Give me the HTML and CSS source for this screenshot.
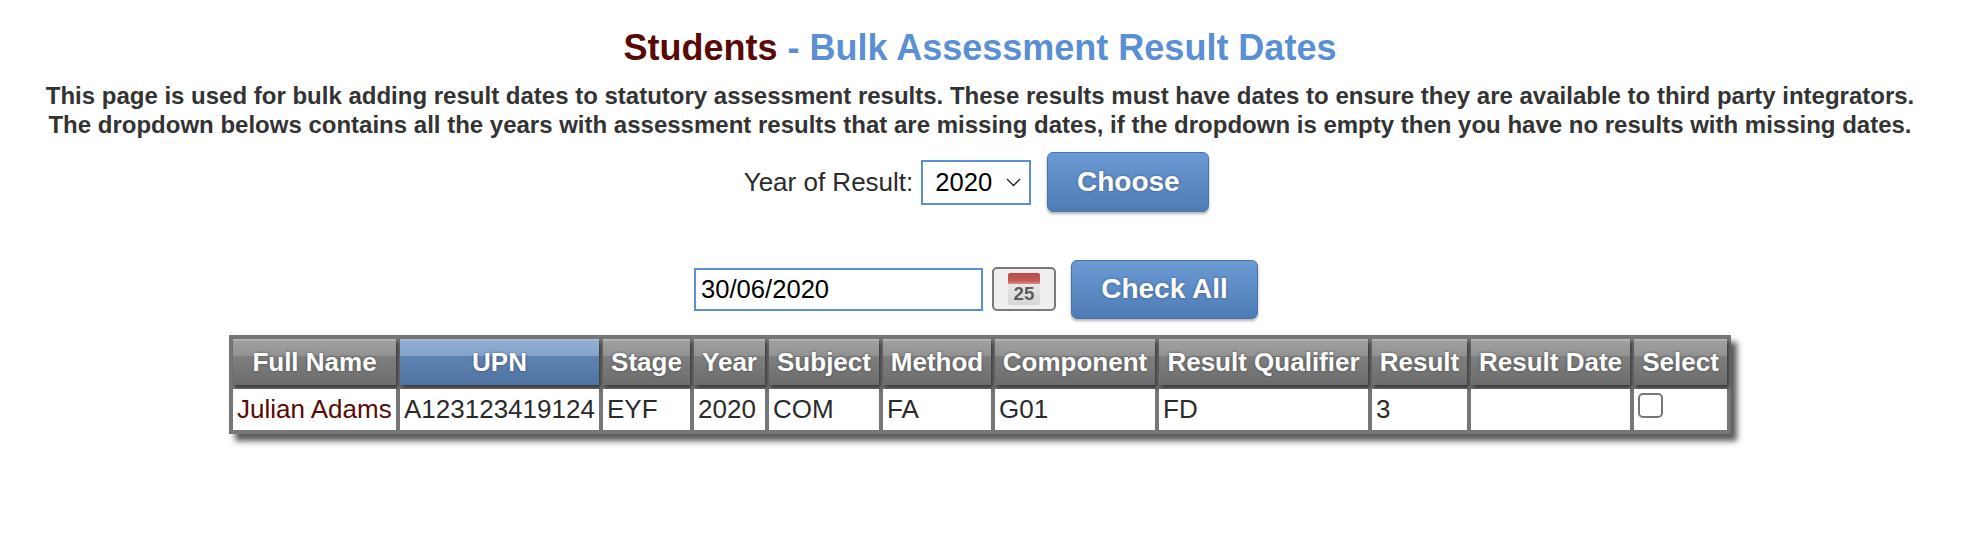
FILE: index.html
```html
<!DOCTYPE html>
<html lang="en">
	<head>
		<meta charset="UTF-8" />
		<title>Bulk Assessment Result Dates</title>
		<link rel="stylesheet" href="styles.css">
	</head>
	<body>
		<h1><span class="crumb">Students</span> - Bulk Assessment Result Dates</h1>
		<p class="intro">
			This page is used for bulk adding result dates to statutory assessment results. These results must have dates to ensure they are available to third party integrators.<br />
			The dropdown belows contains all the years with assessment results that are missing dates, if the dropdown is empty then you have no results with missing dates.
		</p>

		<form class="year-form">
			<label for="year">Year of Result:</label>
			<div class="select-box" id="year">
				<span>2020</span>
				<svg width="15" height="9" viewBox="0 0 15 9"><path d="M1 1l6.5 6.5L14 1" fill="none" stroke="#222" stroke-width="1.3" /></svg>
			</div>
			<button type="button" class="btn btn-choose">Choose</button>
		</form>

		<form class="date-form">
			<input type="text" class="date-input" value="30/06/2020" />
			<button type="button" class="cal-btn">
				<svg class="cal-icon" width="32" height="32" viewBox="0 0 32 32">
					<defs>
						<linearGradient id="cal-page" x1="0" y1="0" x2="0" y2="1">
							<stop offset="0" stop-color="#f0f0f0" />
							<stop offset="1" stop-color="#d6d6d6" />
						</linearGradient>
						<linearGradient id="cal-top" x1="0" y1="0" x2="0" y2="1">
							<stop offset="0" stop-color="#b94a48" />
							<stop offset="0.7" stop-color="#c05a58" />
							<stop offset="1" stop-color="#d98e8b" />
						</linearGradient>
					</defs>
					<rect width="32" height="32" rx="2" fill="url(#cal-page)" />
					<path d="M0 2a2 2 0 0 1 2-2h28a2 2 0 0 1 2 2v9H0z" fill="url(#cal-top)" />
					<text x="16" y="27" text-anchor="middle" class="cal-day">25</text>
				</svg>
			</button>
			<button type="button" class="btn btn-check">Check All</button>
		</form>

		<div class="table-wrap">
			<table class="results">
				<thead>
					<tr>
						<th class="c-name">Full Name</th>
						<th class="c-upn sorted">UPN</th>
						<th class="c-stage">Stage</th>
						<th class="c-year">Year</th>
						<th class="c-subject">Subject</th>
						<th class="c-method">Method</th>
						<th class="c-comp">Component</th>
						<th class="c-qual">Result Qualifier</th>
						<th class="c-result">Result</th>
						<th class="c-date">Result Date</th>
						<th class="c-select">Select</th>
					</tr>
				</thead>
				<tbody>
					<tr>
						<td><a href="#">Julian Adams</a></td>
						<td>A123123419124</td>
						<td>EYF</td>
						<td>2020</td>
						<td>COM</td>
						<td>FA</td>
						<td>G01</td>
						<td>FD</td>
						<td>3</td>
						<td></td>
						<td class="select-cell"><span class="check"></span></td>
					</tr>
				</tbody>
			</table>
		</div>
	</body>
</html>
```

FILE: styles.css
```css
* {
	margin: 0;
	padding: 0;
	box-sizing: border-box;
}

body {
	background-color: #fff;
	color: #2b2b2b;
	font: 26px "Liberation Sans", Arial, sans-serif;
	min-height: 100vh;
	display: flex;
	flex-direction: column;
	align-items: center;
	padding-right: 12px;
}

h1 {
	margin-top: 28px;
	font-size: 36px;
	line-height: 40px;
	color: #5b8fd4;
}
.crumb {
	color: #5a0a05;
}

.intro {
	margin-top: 13px;
	font-size: 24px;
	line-height: 29px;
	font-weight: bold;
	text-align: center;
	white-space: nowrap;
	color: #333;
}

.year-form {
	margin-top: 13px;
	display: flex;
	align-items: center;
	gap: 8px;
	height: 60px;
	padding-right: 7px;
}
.select-box {
	width: 110px;
	height: 45px;
	border: 2px solid #5b8fd4;
	color: #000;
	font-size: 25.6px;
	display: flex;
	align-items: center;
	justify-content: space-between;
	padding: 0 8px 0 12px;
}
.btn-choose {
	margin-left: 8px;
	width: 162px;
	height: 60px;
}

.btn {
	border: 1px solid #4a74a8;
	border-radius: 6px;
	background: linear-gradient(#6c9ad4, #4f7cb5);
	box-shadow: 0 2px 3px rgba(0, 0, 0, 0.3);
	color: #fff;
	font: bold 28px "Liberation Sans", Arial, sans-serif;
	text-shadow: 0 0 3px rgba(0, 0, 0, 0.35);
}

.date-form {
	margin-top: 47px;
	display: flex;
	align-items: center;
	height: 60px;
	padding-right: 8px;
}
.date-input {
	width: 289px;
	height: 43px;
	border: 2px solid #5b8fd4;
	padding: 0 5px;
	color: #000;
	font: 25.6px "Liberation Sans", Arial, sans-serif;
}
.cal-btn {
	width: 64px;
	height: 44px;
	margin-left: 9px;
	border: 2px solid #7a7a7a;
	border-radius: 5px;
	background-color: #efefef;
	display: flex;
	align-items: center;
	justify-content: center;
}
.cal-icon {
	filter: blur(0.7px);
}
.cal-day {
	font: bold 19px "Liberation Sans", Arial, sans-serif;
	fill: #5c5c5c;
}
.btn-check {
	margin-left: 15px;
	width: 187px;
	height: 59px;
}

.table-wrap {
	margin-top: 16px;
	width: 1502px;
	box-shadow: 6px 7px 6px rgba(0, 0, 0, 0.65);
}
.results {
	border-collapse: separate;
	border-spacing: 4px;
	background-color: #777;
	table-layout: fixed;
	width: 100%;
}
.results th {
	height: 46px;
	padding: 0;
	color: #fff;
	white-space: nowrap;
	background: linear-gradient(#b8b8b8 0, #b8b8b8 1px, #a0a0a0 2px, #929292 36%, #808080 36%, #6c6c6c 100%);
	box-shadow: 2px 3px 4px rgba(0, 0, 0, 0.55);
	text-shadow: 0 0 3px rgba(0, 0, 0, 0.4);
}
.results th.sorted {
	background: linear-gradient(#a8bfdc 0, #a8bfdc 1px, #92add2 2px, #86a3ca 36%, #5f83b1 36%, #4f74a4 100%);
}
.results td {
	height: 41px;
	padding: 0 4px 1px;
	background-color: #fff;
	white-space: nowrap;
	line-height: 40px;
}
.results a {
	color: #5a0a05;
	text-decoration: none;
}

.c-name { width: 163px; }
.c-upn { width: 199px; }
.c-stage { width: 87px; }
.c-year { width: 71px; }
.c-subject { width: 110px; }
.c-method { width: 108px; }
.c-comp { width: 160px; }
.c-qual { width: 209px; }
.c-result { width: 95px; }
.c-date { width: 159px; }
.c-select { width: 93px; }

.results td.select-cell {
	vertical-align: top;
	line-height: 0;
}
.check {
	display: block;
	width: 25px;
	height: 25px;
	margin-top: 4px;
	border: 2px solid #777;
	border-radius: 5px;
	background-color: #fff;
}
```
